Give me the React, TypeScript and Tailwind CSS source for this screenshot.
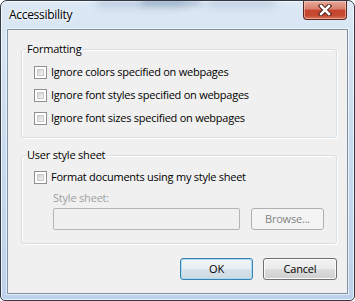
import React from "react";

const font = { fontFamily: '"Segoe UI", "Open Sans", "Noto Sans", sans-serif' };

function Check({ label }: { label: string }) {
  return (
    <label className="flex items-center gap-[4px] h-[23px] text-[11px] tracking-[-0.25px] text-black">
      <span className="w-[13px] h-[13px] border border-[#8e8f8f] bg-white p-[2px] shrink-0">
        <span className="block w-full h-full bg-[linear-gradient(135deg,#d2d2d2,#f4f4f4)] border border-[#c9c9c9]" />
      </span>
      <span>{label}</span>
    </label>
  );
}

function Group({ title, children, className }: { title: string; children: React.ReactNode; className?: string }) {
  return (
    <fieldset className={`w-[316px] border border-[#d5dfe5] rounded-[3px] shadow-[inset_1px_1px_0_#fff,1px_1px_0_#fff] ${className ?? ""}`}>
      <legend className="ml-[4px] px-[1px] h-[16px] leading-[16px] text-[11px] tracking-[-0.2px] text-black">{title}</legend>
      <div className="pl-[12px]">{children}</div>
    </fieldset>
  );
}

function Button({ children, primary, disabled, className }: { children: React.ReactNode; primary?: boolean; disabled?: boolean; className?: string }) {
  const base = "h-[22px] rounded-[3px] border text-[11px] tracking-[-0.2px] flex items-center justify-center";
  const look = disabled
    ? "border-[#adb2b5] bg-[#f4f4f4] text-[#838383]"
    : primary
    ? "border-[#3c7fb1] bg-[linear-gradient(#f1f5f8_0%,#e8eef2_50%,#d9e3ea_50%,#cdd9e2_100%)] shadow-[inset_0_0_0_1px_#a8ddf3] text-black"
    : "border-[#707070] bg-[linear-gradient(#f2f2f2_0%,#ebebeb_50%,#dddddd_50%,#cfcfcf_100%)] shadow-[inset_0_0_0_1px_#fcfcfc] text-black";
  return <div className={`${base} ${look} ${className ?? ""}`}>{children}</div>;
}

export default function App() {
  return (
    <div style={font} className="w-[355px] h-[301px] bg-white">
      <div className="relative w-[355px] h-[301px] border border-[#2f3a46] rounded-t-[7px] rounded-b-[5px] overflow-hidden flex flex-col bg-[linear-gradient(#dce8f5_0%,#cbdcee_40%,#bcd2ea_100%)] shadow-[inset_0_0_0_1px_rgba(255,255,255,0.7)]">
        {/* glass blur behind title bar */}
        <div className="absolute left-[95px] top-[-4px] w-[90px] h-[10px] rounded-full bg-[#8da6c0] opacity-40 blur-[4px]" />
        <div className="absolute left-[140px] top-[-3px] w-[60px] h-[8px] rounded-full bg-[#6f8aa6] opacity-40 blur-[3px]" />
        <div className="absolute left-[205px] top-[-3px] w-[70px] h-[9px] rounded-full bg-[#8aa3bd] opacity-35 blur-[4px]" />

        {/* title bar */}
        <div className="relative h-[28px] flex items-center pl-[8px] pb-[1px]">
          <span className="text-[12px] tracking-[-0.3px] text-black [text-shadow:0_0_6px_#fff,0_0_3px_#fff]">Accessibility</span>
          <div className="absolute right-[7px] top-0 w-[44px] h-[19px] rounded-b-[4px] border border-t-0 border-[#5d2620] bg-[linear-gradient(#e9a99b_0%,#d7806c_45%,#c7452f_50%,#c5492f_80%,#d8765c_100%)] shadow-[inset_0_0_0_1px_rgba(255,220,210,0.5)] flex items-center justify-center">
            <svg width="14" height="12" viewBox="0 0 14 12">
              <path d="M3 2 L11 10 M11 2 L3 10" stroke="#4a1c16" strokeWidth="4.5" strokeLinecap="square" />
              <path d="M3 2 L11 10 M11 2 L3 10" stroke="#ffffff" strokeWidth="2.5" strokeLinecap="square" />
            </svg>
          </div>
        </div>

        {/* client area */}
        <div className="relative mx-[6px] mb-[6px] flex-1 border border-[#7f92a6] bg-[#f0f0f0] shadow-[0_0_0_1px_rgba(255,255,255,0.6)] flex flex-col pl-[13px] pt-[11px]">
          <Group title="Formatting" className="pt-[4px] pb-[7px]">
            <Check label="Ignore colors specified on webpages" />
            <Check label="Ignore font styles specified on webpages" />
            <Check label="Ignore font sizes specified on webpages" />
          </Group>

          <Group title="User style sheet" className="mt-[9px] pt-[3px] pb-[13px]">
            <Check label="Format documents using my style sheet" />
            <div className="pl-[19px] mt-[1px]">
              <div className="h-[16px] leading-[16px] text-[11px] tracking-[-0.2px] text-[#a0a0a0]">Style sheet:</div>
              <div className="mt-[2px] flex items-center gap-[11px]">
                <div className="w-[187px] h-[22px] border border-[#b5b5b5] rounded-[2px] bg-[#f0f0f0]" />
                <Button disabled className="w-[73px]">Browse...</Button>
              </div>
            </div>
          </Group>

          <div className="mt-[14px] w-[316px] flex justify-end gap-[10px]">
            <Button primary className="w-[73px]">OK</Button>
            <Button className="w-[74px]">Cancel</Button>
          </div>
        </div>
      </div>
    </div>
  );
}
